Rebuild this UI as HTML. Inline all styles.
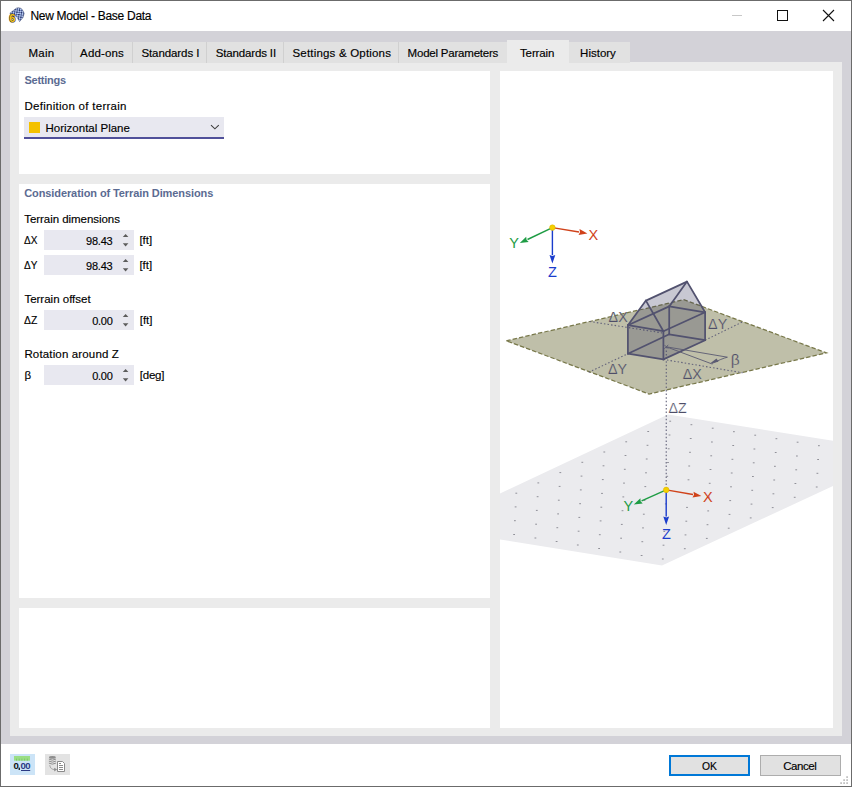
<!DOCTYPE html>
<html><head><meta charset="utf-8">
<style>
*{margin:0;padding:0;box-sizing:border-box}
html,body{width:852px;height:787px;overflow:hidden;background:#fff}
body{position:relative;font-family:"Liberation Sans",sans-serif;font-size:11.5px;color:#000}
.a{position:absolute}
.t{position:absolute;line-height:14px;white-space:nowrap;-webkit-text-stroke:0.15px currentColor}
.tab{position:absolute;top:42px;height:21px;background:#e1e1e1}
.sep{position:absolute;top:42px;height:21px;width:1px;background:#d0d0d0}
.inp{position:absolute;left:44px;width:90px;height:20px;background:#e8e8f0}
.up{position:absolute;width:0;height:0;border-left:2.5px solid transparent;border-right:2.5px solid transparent;border-bottom:3px solid #5a5a5a}
.dn{position:absolute;width:0;height:0;border-left:2.5px solid transparent;border-right:2.5px solid transparent;border-top:3px solid #5a5a5a}
</style></head><body>
<div class="a" style="left:0;top:0;width:852px;height:787px;border:1px solid #6b6b6b"></div>
<svg class="a" style="left:5px;top:4px" width="24" height="22" viewBox="0 0 24 22">
  <defs><pattern id="chk" width="3.2" height="3.2" patternUnits="userSpaceOnUse" patternTransform="rotate(-38) translate(0.4 0.2)"><rect width="3.2" height="3.2" fill="#b4c8f0"/><rect width="1.6" height="1.6" fill="#2a3870"/><rect x="1.6" y="1.6" width="1.6" height="1.6" fill="#4a5c98"/></pattern></defs>
  <path d="M4.8 9.3 L11.3 4.2 L13.2 3.7 L15.8 4.2 L17.4 5.8 L19.2 9.3 L18 13.5 L14.6 17.6 L11.3 12.1 Z" fill="url(#chk)" stroke="#3a4670" stroke-width="0.5"/>
  <text x="4.2" y="18.3" font-size="11.2" font-weight="bold" fill="#f2c41c" stroke="#3e3a2a" stroke-width="1.2" paint-order="stroke" font-family="Liberation Sans">6</text>
</svg>
<div class="a" style="left:732px;top:15px;width:10px;height:1px;background:#c8c8c8"></div>
<div class="a" style="left:777px;top:10px;width:11px;height:11px;border:1px solid #111"></div>
<svg class="a" style="left:822px;top:9px" width="13" height="13" viewBox="0 0 13 13"><path d="M1 1 L12 12 M12 1 L1 12" stroke="#111" stroke-width="1.1"/></svg>
<div class="a" style="left:1px;top:31px;width:850px;height:713px;background:#d3d2d8"></div>
<div class="a" style="left:10px;top:62px;width:832px;height:674px;background:#ebebeb"></div>
<div class="tab" style="left:10px;width:497px"></div>
<div class="tab" style="left:569px;width:61px"></div>
<div class="sep" style="left:71px"></div><div class="sep" style="left:132px"></div><div class="sep" style="left:206px"></div>
<div class="sep" style="left:283px"></div><div class="sep" style="left:398px"></div>
<div class="a" style="left:507px;top:40px;width:62px;height:23px;background:#ebebeb"></div>
<div class="a" style="left:19px;top:71px;width:471px;height:103px;background:#fff"></div>
<div class="a" style="left:19px;top:184px;width:471px;height:414px;background:#fff"></div>
<div class="a" style="left:19px;top:608px;width:471px;height:120px;background:#fff"></div>
<div class="a" style="left:500px;top:71px;width:333px;height:657px;background:#fff"></div>
<div class="a" style="left:24px;top:117px;width:200px;height:22px;background:#e8e8f0;border-bottom:2px solid #50509a"></div>
<div class="a" style="left:29px;top:122px;width:11px;height:11px;background:#f4c100"></div>
<svg class="a" style="left:209px;top:123px" width="12" height="8" viewBox="0 0 12 8"><path d="M2 2.2 L5.9 5.9 L9.8 2.2" fill="none" stroke="#3c3c3c" stroke-width="1.05"/></svg>
<div class="inp" style="top:230px"></div><div class="inp" style="top:255px"></div>
<div class="inp" style="top:310px"></div><div class="inp" style="top:365px"></div>
<svg class="a" style="left:0;top:0" width="200" height="400">
<g fill="#5c5c5c">
<path d="M122.8 237 L125.6 234 L128.4 237 Z M122.8 243.2 L125.6 246.4 L128.4 243.2 Z"/>
<path d="M122.8 262 L125.6 259 L128.4 262 Z M122.8 268.2 L125.6 271.4 L128.4 268.2 Z"/>
<path d="M122.8 317 L125.6 314 L128.4 317 Z M122.8 323.2 L125.6 326.4 L128.4 323.2 Z"/>
<path d="M122.8 372 L125.6 369 L128.4 372 Z M122.8 378.2 L125.6 381.4 L128.4 378.2 Z"/>
</g></svg>
<div class="a" style="left:10px;top:754px;width:25px;height:21px;background:#cce4f7"></div>
<svg class="a" style="left:10px;top:754px" width="25" height="21" viewBox="10 754 25 21">
  <rect x="14" y="756" width="16" height="4.7" fill="#9ade84"/>
  <path d="M16.5 758.6 V760.7 M19.2 758.6 V760.7 M21.9 758.6 V760.7 M24.6 758.6 V760.7 M27.3 758.6 V760.7" stroke="#7cc46a" stroke-width="0.9"/>
  <text x="13.4" y="769.2" font-size="9.6" font-weight="bold" fill="#111" font-family="Liberation Sans">0</text>
  <rect x="18.6" y="767.6" width="1.3" height="2.4" fill="#111"/>
  <text x="20.6" y="769.2" font-size="9.6" font-weight="bold" fill="#2b3a84" font-family="Liberation Sans" letter-spacing="-0.6">00</text>
  <rect x="21" y="770" width="9.2" height="1" fill="#2b3a84"/>
</svg>
<div class="a" style="left:45px;top:754px;width:25px;height:21px;background:#e3e3e3"></div>
<svg class="a" style="left:45px;top:754px" width="25" height="21" viewBox="45 754 25 21">
  <ellipse cx="52.4" cy="757.4" rx="3.4" ry="1.3" fill="#8e8e8e"/>
  <g fill="none" stroke="#8e8e8e" stroke-width="1" stroke-linecap="round">
   <path d="M49.2 759.3 Q52.4 761.2 55.6 759.3 M49.2 761.3 Q52.4 763.2 55.6 761.3 M49.2 763.3 Q52.4 765.2 55.6 763.3"/>
   <path d="M49.8 765.5 Q50.2 769.6 54.6 769.6" stroke="#a4a4a4"/>
  </g>
  <path d="M54.2 767.8 L57.2 769.6 L54.2 771.4 Z" fill="#8e8e8e"/>
  <path d="M57.5 761.5 H62.5 L64.5 763.5 V771.5 H57.5 Z" fill="#fff" stroke="#8a8a8a" stroke-width="1"/>
  <path d="M59 763.5 H61 M59 765.5 H63 M59 767.5 H63 M59 769.5 H63" stroke="#8a8a8a" stroke-width="1"/>
</svg>
<div class="a" style="left:669px;top:755px;width:81px;height:21px;background:#e1e1e1;border:2px solid #0078d7"></div>
<div class="a" style="left:760px;top:755px;width:81px;height:21px;background:#e1e1e1;border:1px solid #adadad"></div>
<svg class="a" style="left:838px;top:774px" width="12" height="12" viewBox="838 774 12 12"><g fill="#b4b4b4">
<rect x="846.3" y="776.3" width="1.6" height="1.6"/><rect x="843.3" y="779.3" width="1.6" height="1.6"/><rect x="846.3" y="779.3" width="1.6" height="1.6"/>
<rect x="840.3" y="782.3" width="1.6" height="1.6"/><rect x="843.3" y="782.3" width="1.6" height="1.6"/><rect x="846.3" y="782.3" width="1.6" height="1.6"/></g></svg>
<svg class="a" style="left:500px;top:71px" width="333" height="657" viewBox="500 71 333 657">
<polygon points="500.0,493.5 668.0,414.5 833.0,440.8 833.0,486.0 662.0,565.5 500.0,539.5" fill="#ebebee"/>
<g fill="#909098"><rect x="515.4" y="492.7" width="1.8" height="1"/><rect x="537.4" y="482.4" width="1.8" height="1"/><rect x="559.4" y="472.1" width="1.8" height="1"/><rect x="581.4" y="461.8" width="1.8" height="1"/><rect x="603.4" y="451.5" width="1.8" height="1"/><rect x="625.3" y="441.3" width="1.8" height="1"/><rect x="647.3" y="431.0" width="1.8" height="1"/><rect x="669.3" y="420.7" width="1.8" height="1"/><rect x="514.7" y="506.4" width="1.8" height="1"/><rect x="536.7" y="496.2" width="1.8" height="1"/><rect x="558.7" y="485.9" width="1.8" height="1"/><rect x="580.6" y="475.6" width="1.8" height="1"/><rect x="602.6" y="465.3" width="1.8" height="1"/><rect x="624.6" y="455.0" width="1.8" height="1"/><rect x="646.6" y="444.8" width="1.8" height="1"/><rect x="668.6" y="434.5" width="1.8" height="1"/><rect x="690.5" y="424.2" width="1.8" height="1"/><rect x="514.0" y="520.2" width="1.8" height="1"/><rect x="535.9" y="509.9" width="1.8" height="1"/><rect x="557.9" y="499.7" width="1.8" height="1"/><rect x="579.9" y="489.4" width="1.8" height="1"/><rect x="601.9" y="479.1" width="1.8" height="1"/><rect x="623.9" y="468.8" width="1.8" height="1"/><rect x="645.8" y="458.5" width="1.8" height="1"/><rect x="667.8" y="448.3" width="1.8" height="1"/><rect x="689.8" y="438.0" width="1.8" height="1"/><rect x="711.8" y="427.7" width="1.8" height="1"/><rect x="513.2" y="534.0" width="1.8" height="1"/><rect x="535.2" y="523.7" width="1.8" height="1"/><rect x="557.2" y="513.4" width="1.8" height="1"/><rect x="579.2" y="503.2" width="1.8" height="1"/><rect x="601.1" y="492.9" width="1.8" height="1"/><rect x="623.1" y="482.6" width="1.8" height="1"/><rect x="645.1" y="472.3" width="1.8" height="1"/><rect x="667.1" y="462.0" width="1.8" height="1"/><rect x="689.1" y="451.8" width="1.8" height="1"/><rect x="711.0" y="441.5" width="1.8" height="1"/><rect x="733.0" y="431.2" width="1.8" height="1"/><rect x="534.5" y="537.5" width="1.8" height="1"/><rect x="556.4" y="527.2" width="1.8" height="1"/><rect x="578.4" y="516.9" width="1.8" height="1"/><rect x="600.4" y="506.7" width="1.8" height="1"/><rect x="622.4" y="496.4" width="1.8" height="1"/><rect x="644.4" y="486.1" width="1.8" height="1"/><rect x="666.3" y="475.8" width="1.8" height="1"/><rect x="688.3" y="465.5" width="1.8" height="1"/><rect x="710.3" y="455.3" width="1.8" height="1"/><rect x="732.3" y="445.0" width="1.8" height="1"/><rect x="754.3" y="434.7" width="1.8" height="1"/><rect x="555.7" y="541.0" width="1.8" height="1"/><rect x="577.7" y="530.7" width="1.8" height="1"/><rect x="599.7" y="520.4" width="1.8" height="1"/><rect x="621.6" y="510.2" width="1.8" height="1"/><rect x="643.6" y="499.9" width="1.8" height="1"/><rect x="665.6" y="489.6" width="1.8" height="1"/><rect x="687.6" y="479.3" width="1.8" height="1"/><rect x="709.6" y="469.0" width="1.8" height="1"/><rect x="731.5" y="458.8" width="1.8" height="1"/><rect x="753.5" y="448.5" width="1.8" height="1"/><rect x="775.5" y="438.2" width="1.8" height="1"/><rect x="576.9" y="544.5" width="1.8" height="1"/><rect x="598.9" y="534.2" width="1.8" height="1"/><rect x="620.9" y="523.9" width="1.8" height="1"/><rect x="642.9" y="513.7" width="1.8" height="1"/><rect x="664.9" y="503.4" width="1.8" height="1"/><rect x="686.8" y="493.1" width="1.8" height="1"/><rect x="708.8" y="482.8" width="1.8" height="1"/><rect x="730.8" y="472.5" width="1.8" height="1"/><rect x="752.8" y="462.3" width="1.8" height="1"/><rect x="774.8" y="452.0" width="1.8" height="1"/><rect x="796.7" y="441.7" width="1.8" height="1"/><rect x="598.2" y="548.0" width="1.8" height="1"/><rect x="620.2" y="537.7" width="1.8" height="1"/><rect x="642.1" y="527.4" width="1.8" height="1"/><rect x="664.1" y="517.2" width="1.8" height="1"/><rect x="686.1" y="506.9" width="1.8" height="1"/><rect x="708.1" y="496.6" width="1.8" height="1"/><rect x="730.1" y="486.3" width="1.8" height="1"/><rect x="752.0" y="476.0" width="1.8" height="1"/><rect x="774.0" y="465.8" width="1.8" height="1"/><rect x="796.0" y="455.5" width="1.8" height="1"/><rect x="818.0" y="445.2" width="1.8" height="1"/><rect x="619.4" y="551.5" width="1.8" height="1"/><rect x="641.4" y="541.2" width="1.8" height="1"/><rect x="663.4" y="530.9" width="1.8" height="1"/><rect x="685.4" y="520.7" width="1.8" height="1"/><rect x="707.3" y="510.4" width="1.8" height="1"/><rect x="729.3" y="500.1" width="1.8" height="1"/><rect x="751.3" y="489.8" width="1.8" height="1"/><rect x="773.3" y="479.5" width="1.8" height="1"/><rect x="795.3" y="469.3" width="1.8" height="1"/><rect x="817.2" y="459.0" width="1.8" height="1"/><rect x="640.7" y="555.0" width="1.8" height="1"/><rect x="662.6" y="544.7" width="1.8" height="1"/><rect x="684.6" y="534.4" width="1.8" height="1"/><rect x="706.6" y="524.2" width="1.8" height="1"/><rect x="728.6" y="513.9" width="1.8" height="1"/><rect x="750.6" y="503.6" width="1.8" height="1"/><rect x="772.5" y="493.3" width="1.8" height="1"/><rect x="794.5" y="483.0" width="1.8" height="1"/><rect x="816.5" y="472.8" width="1.8" height="1"/><rect x="661.9" y="558.5" width="1.8" height="1"/><rect x="683.9" y="548.2" width="1.8" height="1"/><rect x="705.9" y="537.9" width="1.8" height="1"/><rect x="727.8" y="527.7" width="1.8" height="1"/><rect x="749.8" y="517.4" width="1.8" height="1"/><rect x="771.8" y="507.1" width="1.8" height="1"/><rect x="793.8" y="496.8" width="1.8" height="1"/><rect x="815.8" y="486.5" width="1.8" height="1"/></g>
<polygon points="506.3,340.8 683.8,299.7 826.5,352.9 649.0,394.0" fill="#bfbfa9" stroke="#78784a" stroke-width="1.25" stroke-dasharray="4.4 2.1"/>
<line x1="589.7" y1="321.5" x2="663.4" y2="333.1" stroke="#62627a" stroke-width="1.1" stroke-dasharray="1.5 2.1" fill="none"/>
<line x1="588.7" y1="372.3" x2="627.9" y2="353.7" stroke="#62627a" stroke-width="1.1" stroke-dasharray="1.5 2.1" fill="none"/>
<line x1="705.1" y1="340.2" x2="742.9" y2="321.7" stroke="#62627a" stroke-width="1.1" stroke-dasharray="1.5 2.1" fill="none"/>
<line x1="663.4" y1="359.4" x2="742.7" y2="372.8" stroke="#62627a" stroke-width="1.1" stroke-dasharray="1.5 2.1" fill="none"/>
<line x1="666.3" y1="346.8" x2="666.2" y2="489.9" stroke="#62627a" stroke-width="1.1" stroke-dasharray="1.5 2.1" fill="none"/>
<polygon points="627.9,353.7 627.9,325.2 645.9,300.6 687.0,281.6 705.1,312.3 705.1,340.2 663.4,359.4" fill="#35355a" fill-opacity="0.27"/>
<g stroke="#52526f" stroke-width="1.75" stroke-linecap="round" stroke-linejoin="round"><line x1="627.9" y1="353.7" x2="627.9" y2="325.2"/><line x1="627.9" y1="325.2" x2="645.9" y2="300.6"/><line x1="645.9" y1="300.6" x2="663.4" y2="331.2"/><line x1="663.4" y1="331.2" x2="663.4" y2="359.4"/><line x1="663.4" y1="359.4" x2="627.9" y2="353.7"/><line x1="627.9" y1="325.2" x2="663.4" y2="331.2"/><line x1="669.2" y1="334.3" x2="669.2" y2="306.4"/><line x1="669.2" y1="306.4" x2="687" y2="281.6"/><line x1="687" y1="281.6" x2="705.1" y2="312.3"/><line x1="705.1" y1="312.3" x2="705.1" y2="340.2"/><line x1="705.1" y1="340.2" x2="669.2" y2="334.3"/><line x1="669.2" y1="306.4" x2="705.1" y2="312.3"/><line x1="627.9" y1="353.7" x2="669.2" y2="334.3"/><line x1="627.9" y1="325.2" x2="669.2" y2="306.4"/><line x1="645.9" y1="300.6" x2="687" y2="281.6"/><line x1="663.4" y1="331.2" x2="705.1" y2="312.3"/><line x1="663.4" y1="359.4" x2="705.1" y2="340.2"/></g>
<line x1="666.3" y1="346.8" x2="727.4" y2="357.2" stroke="#5a5a72" stroke-width="0.9" fill="none"/>
<line x1="666.3" y1="346.8" x2="712.4" y2="364.1" stroke="#5a5a72" stroke-width="0.9" fill="none"/>
<path d="M727.4 357.2 Q722 358.5 712 363.5" stroke="#5a5a72" stroke-width="0.9" fill="none"/>
<path d="M710 363.6 L716.5 358.6 L718.5 361.8 Z" fill="#5a5a72"/>
<path d="M664.3 344.8 L668.3 348.8 M668.3 344.8 L664.3 348.8" stroke="#5a5a72" stroke-width="0.9" fill="none"/>
<line x1="552.4" y1="227.6" x2="579.0" y2="232.0" stroke="#d0421a" stroke-width="1.4"/><polygon points="587.4,233.4 578.5,234.9 580.0,232.2 579.5,229.1" fill="#d0421a"/>
<line x1="552.4" y1="227.6" x2="527.5" y2="239.5" stroke="#1e9c44" stroke-width="1.4"/><polygon points="519.8,243.1 526.2,236.8 526.6,239.9 528.7,242.1" fill="#1e9c44"/>
<line x1="552.4" y1="227.6" x2="552.4" y2="255.1" stroke="#1a3ccc" stroke-width="1.4"/><polygon points="552.4,263.6 549.5,255.1 552.4,256.1 555.3,255.1" fill="#1a3ccc"/>
<circle cx="552.4" cy="227.6" r="2.8" fill="#f5d000" stroke="#d8b000" stroke-width="0.5"/>
<line x1="666.2" y1="489.9" x2="693.0" y2="494.5" stroke="#d0421a" stroke-width="1.4"/><polygon points="701.4,496.0 692.5,497.4 694.0,494.7 693.5,491.7" fill="#d0421a"/>
<line x1="666.2" y1="489.9" x2="641.6" y2="500.9" stroke="#1e9c44" stroke-width="1.4"/><polygon points="633.8,504.4 640.4,498.3 640.6,501.3 642.7,503.6" fill="#1e9c44"/>
<line x1="666.2" y1="489.9" x2="666.2" y2="516.5" stroke="#1a3ccc" stroke-width="1.4"/><polygon points="666.2,525.0 663.3,516.5 666.2,517.5 669.1,516.5" fill="#1a3ccc"/>
<circle cx="666.2" cy="489.9" r="2.8" fill="#f5d000" stroke="#d8b000" stroke-width="0.5"/>
<text x="608.60" y="322.00" font-family="Liberation Sans" font-size="14.3" fill="#4e4e68" stroke="#bfbfa9" stroke-width="0.22" paint-order="fill">&#916;X</text>
<text x="607.90" y="374.00" font-family="Liberation Sans" font-size="14.3" fill="#4e4e68" stroke="#bfbfa9" stroke-width="0.22" paint-order="fill">&#916;Y</text>
<text x="708.10" y="329.20" font-family="Liberation Sans" font-size="14.3" fill="#4e4e68" stroke="#bfbfa9" stroke-width="0.22" paint-order="fill">&#916;Y</text>
<text x="682.70" y="379.20" font-family="Liberation Sans" font-size="14.3" fill="#4e4e68" stroke="#bfbfa9" stroke-width="0.22" paint-order="fill">&#916;X</text>
<text x="668.50" y="413.00" font-family="Liberation Sans" font-size="14.3" fill="#4e4e68" stroke="#fff" stroke-width="0.22" paint-order="fill">&#916;Z</text>
<text x="730.80" y="364.50" font-family="Liberation Sans" font-size="15.5" fill="#4e4e68" stroke="#bfbfa9" stroke-width="0.22" paint-order="fill">&#946;</text>
<text x="588.50" y="239.90" font-family="Liberation Sans" font-size="14.5" fill="#d0421a">X</text>
<text x="509.30" y="248.30" font-family="Liberation Sans" font-size="14.5" fill="#1e9c44">Y</text>
<text x="547.90" y="276.80" font-family="Liberation Sans" font-size="14.5" fill="#1a3ccc">Z</text>
<text x="702.90" y="502.40" font-family="Liberation Sans" font-size="14.5" fill="#d0421a">X</text>
<text x="623.50" y="511.30" font-family="Liberation Sans" font-size="14.5" fill="#1e9c44">Y</text>
<text x="661.90" y="538.80" font-family="Liberation Sans" font-size="14.5" fill="#1a3ccc">Z</text>
</svg>
<div id="title" class="t" style="left:30.40px;top:9.30px;font-size:12px;letter-spacing:-0.280px;">New Model - Base Data</div>
<div id="tab1" class="t" style="left:28.50px;top:46.20px;font-size:11.5px;letter-spacing:0.267px;">Main</div>
<div id="tab2" class="t" style="left:80.10px;top:46.20px;font-size:11.5px;letter-spacing:0.133px;">Add-ons</div>
<div id="tab3" class="t" style="left:141.40px;top:46.20px;font-size:11.5px;letter-spacing:-0.080px;">Standards I</div>
<div id="tab4" class="t" style="left:215.70px;top:46.20px;font-size:11.5px;letter-spacing:-0.145px;">Standards II</div>
<div id="tab5" class="t" style="left:292.50px;top:46.20px;font-size:11.5px;letter-spacing:0.188px;">Settings &amp; Options</div>
<div id="tab6" class="t" style="left:407.60px;top:46.20px;font-size:11.5px;letter-spacing:-0.213px;">Model Parameters</div>
<div id="tab7" class="t" style="left:520.00px;top:46.20px;font-size:11.5px;letter-spacing:-0.133px;">Terrain</div>
<div id="tab8" class="t" style="left:580.10px;top:46.20px;font-size:11.5px;letter-spacing:-0.000px;">History</div>
<div id="h1" class="t" style="left:24.40px;top:72.80px;font-size:11px;letter-spacing:-0.229px;font-weight:bold;color:#5b6b92;-webkit-text-stroke:0">Settings</div>
<div id="l1" class="t" style="left:24.40px;top:98.80px;font-size:11.5px;letter-spacing:0.280px;">Definition of terrain</div>
<div id="combo" class="t" style="left:45.50px;top:121.30px;font-size:11.5px;letter-spacing:0.000px;">Horizontal Plane</div>
<div id="h2" class="t" style="left:24.20px;top:186.30px;font-size:11px;letter-spacing:-0.094px;font-weight:bold;color:#5b6b92;-webkit-text-stroke:0">Consideration of Terrain Dimensions</div>
<div id="l2" class="t" style="left:24.20px;top:211.50px;font-size:11.5px;letter-spacing:-0.047px;">Terrain dimensions</div>
<div id="dx" class="t" style="left:23.90px;top:232.70px;font-size:11.5px;letter-spacing:0.000px;transform:scaleX(0.87);transform-origin:0 0">&#916;X</div>
<div id="v1" class="t" style="left:86.00px;top:234.30px;font-size:11px;letter-spacing:-0.200px;">98.43</div>
<div id="u1" class="t" style="left:139.40px;top:233.30px;font-size:11.5px;letter-spacing:-0.000px;">[ft]</div>
<div id="dy" class="t" style="left:23.90px;top:257.70px;font-size:11.5px;letter-spacing:0.000px;transform:scaleX(0.87);transform-origin:0 0">&#916;Y</div>
<div id="v2" class="t" style="left:86.00px;top:259.30px;font-size:11px;letter-spacing:-0.200px;">98.43</div>
<div id="u2" class="t" style="left:139.40px;top:258.30px;font-size:11.5px;letter-spacing:-0.000px;">[ft]</div>
<div id="l3" class="t" style="left:24.40px;top:292.40px;font-size:11.5px;letter-spacing:0.000px;">Terrain offset</div>
<div id="dz" class="t" style="left:24.40px;top:312.60px;font-size:11.5px;letter-spacing:0.000px;transform:scaleX(0.9);transform-origin:0 0">&#916;Z</div>
<div id="v3" class="t" style="left:92.20px;top:313.60px;font-size:11px;letter-spacing:-0.267px;">0.00</div>
<div id="u3" class="t" style="left:139.70px;top:312.60px;font-size:11.5px;letter-spacing:0.000px;">[ft]</div>
<div id="l4" class="t" style="left:24.40px;top:347.30px;font-size:11.5px;letter-spacing:0.150px;">Rotation around Z</div>
<div id="bt" class="t" style="left:24.40px;top:367.60px;font-size:11.5px;letter-spacing:0.000px;">&#946;</div>
<div id="v4" class="t" style="left:92.20px;top:368.60px;font-size:11px;letter-spacing:-0.267px;">0.00</div>
<div id="u4" class="t" style="left:139.70px;top:367.60px;font-size:11.5px;letter-spacing:-0.200px;">[deg]</div>
<div id="ok" class="t" style="left:702.40px;top:759.20px;font-size:11.5px;letter-spacing:0.000px;transform:scaleX(0.9);transform-origin:0 0">OK</div>
<div id="cancel" class="t" style="left:783.30px;top:759.20px;font-size:11.5px;letter-spacing:-0.480px;">Cancel</div>
</body></html>
